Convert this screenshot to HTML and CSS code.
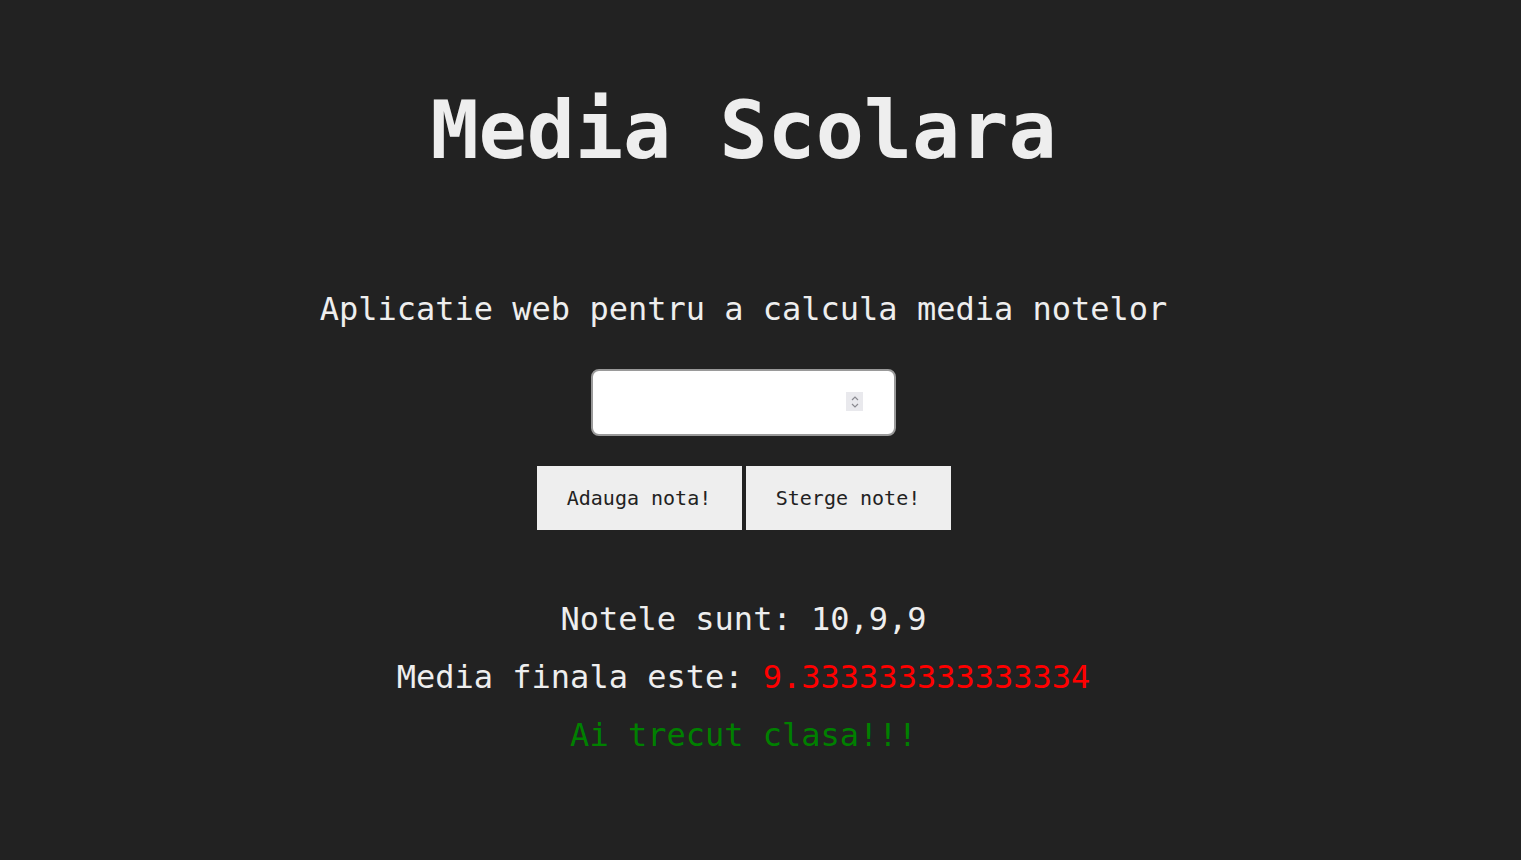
FILE: index.html
```html
<!DOCTYPE html>
<html lang="ro">
<head>
<meta charset="utf-8">
<title>Media Scolara</title>
<link rel="stylesheet" href="styles.css">
</head>
<body>
<main class="app">
  <h1 class="title">Media Scolara</h1>
  <p class="subtitle">Aplicatie web pentru a calcula media notelor</p>
  <div class="field">
    <input class="grade-input" type="text" aria-label="nota">
    <span class="spin">
      <svg width="10" height="14" viewBox="0 0 10 14"><path d="M2 5 L5 2 L8 5" fill="none" stroke="#8a8a90" stroke-width="1.2"/><path d="M2 9 L5 12 L8 9" fill="none" stroke="#8a8a90" stroke-width="1.2"/></svg>
    </span>
  </div>
  <div class="buttons">
    <button class="btn">Adauga nota!</button>
    <button class="btn">Sterge note!</button>
  </div>
  <p class="grades">Notele sunt: 10,9,9</p>
  <p class="average">Media finala este: <span class="avg-value">9.333333333333334</span></p>
  <p class="result">Ai trecut clasa!!!</p>
</main>
</body>
</html>
```
FILE: styles.css
```css
html, body {
  margin: 0;
  padding: 0;
  background: #222222;
  height: 100%;
}
body {
  color: #eeeeee;
  font-family: "DejaVu Sans Mono", monospace;
}
.app {
  display: flex;
  flex-direction: column;
  align-items: center;
  text-align: center;
  padding-right: 34px;
}
.title {
  margin: 84px 0 0;
  font-size: 80px;
  font-weight: bold;
  line-height: 93px;
}
.subtitle {
  margin: 114px 0 0;
  font-size: 32px;
  line-height: 37px;
}
.field {
  position: relative;
  margin-top: 41px;
  width: 305px;
  height: 67px;
}
.grade-input {
  box-sizing: border-box;
  width: 305px;
  height: 67px;
  border: 2px solid #9a9a9a;
  border-radius: 8px;
  background: #ffffff;
  padding: 0 12px;
  font-size: 20px;
  font-family: inherit;
}
.spin {
  position: absolute;
  left: 255px;
  top: 23px;
  width: 17px;
  height: 19px;
  background: #e9e9ed;
  display: flex;
  align-items: center;
  justify-content: center;
}
.buttons {
  display: flex;
  gap: 4px;
  margin-top: 30px;
}
.btn {
  width: 205px;
  height: 64px;
  border: none;
  background: #eeeeee;
  color: #222222;
  font-family: "DejaVu Sans Mono", monospace;
  font-size: 20px;
  padding: 0;
}
.grades {
  margin: 71px 0 0;
  font-size: 32px;
  line-height: 37px;
}
.average {
  margin: 21px 0 0;
  font-size: 32px;
  line-height: 37px;
}
.avg-value {
  color: #ff0000;
}
.result {
  margin: 21px 0 0;
  font-size: 32px;
  line-height: 37px;
  color: #008000;
}
```
